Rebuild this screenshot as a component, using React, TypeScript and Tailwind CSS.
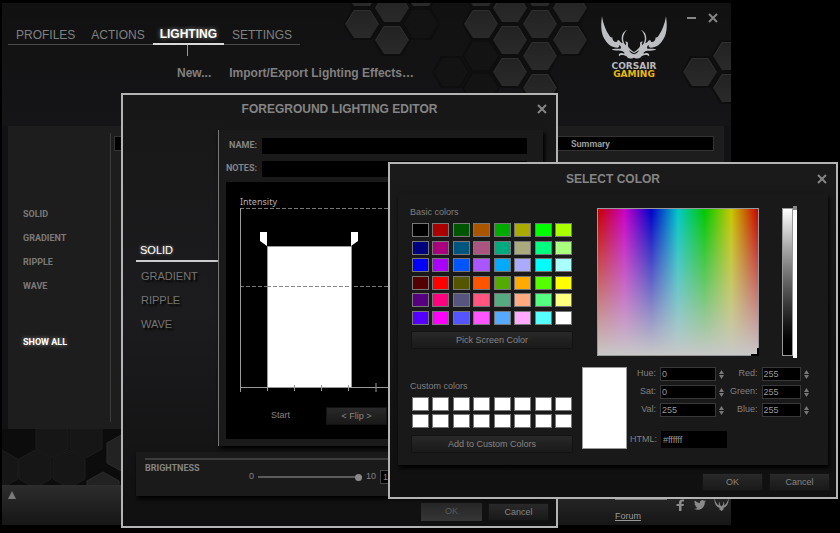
import { useState } from 'react'

const tabs = ['PROFILES', 'ACTIONS', 'LIGHTING', 'SETTINGS']
const effects = ['SOLID', 'GRADIENT', 'RIPPLE', 'WAVE']

const basicColors = [
  '#000000', '#aa0000', '#005500', '#aa5500', '#00aa00', '#aaaa00', '#00ff00', '#aaff00',
  '#00007f', '#aa007f', '#00557f', '#aa557f', '#00aa7f', '#aaaa7f', '#00ff7f', '#aaff7f',
  '#0000ff', '#aa00ff', '#0055ff', '#aa55ff', '#00aaff', '#aaaaff', '#00ffff', '#aaffff',
  '#550000', '#ff0000', '#555500', '#ff5500', '#55aa00', '#ffaa00', '#55ff00', '#ffff00',
  '#55007f', '#ff007f', '#55557f', '#ff557f', '#55aa7f', '#ffaa7f', '#55ff7f', '#ffff7f',
  '#5500ff', '#ff00ff', '#5555ff', '#ff55ff', '#55aaff', '#ffaaff', '#55ffff', '#ffffff',
]
const customColors = Array(16).fill('#ffffff')

// centers of the flat topped hexagons behind the header
const headerHexes = [
  [360, 21, 1], [390, 5, 1], [390, 37, 1], [360, -11, 1], [419, -11, 1], [419, 21, 0],
  [479, 21, 1], [479, -11, 1], [508, 5, 1], [508, 37, 1], [508, 69, 1], [538, -11, 1],
  [538, 21, 1], [538, 53, 1], [538, 85, 1], [568, 5, 1], [568, 37, 1],
  [479, 53, 0], [449, 69, 0], [479, 85, 0],
  [698, 69, 1], [728, 53, 1], [728, 85, 1],
]
const footerHexes = [[50, 10, 0], [84, 10, 0], [0, 40, 0], [33, 40, 0], [67, 40, 0], [121, 24, 1], [101, 62, 1]]

function CloseIcon() {
  return (
    <svg width="10" height="10" viewBox="0 0 10 10" stroke="#858585" strokeWidth="2">
      <path d="M1 1 L9 9 M9 1 L1 9" />
    </svg>
  )
}

function Antlers() {
  const half =
    'M128 50 C123 82 126 108 139 123 C147 135 158 143 174 144 C180 143 182 138 178 136 C184 137 186 142 184 147 C176 149 166 145 157 149 C166 156 182 151 192 156 C198 159 196 163 190 161 C182 158 176 164 179 170 C186 163 194 168 201 169 C204 176 212 179 224 174 L224 164 C218 163 212 158 209 152 L224 161 L224 157 C214 150 203 142 206 132 C207 127 200 123 196 127 C201 127 202 131 199 137 C187 122 190 104 203 90 C189 96 183 113 190 130 C184 131 183 122 175 121 C174 128 168 129 163 124 C160 120 158 116 160 113 C155 115 152 112 149 106 C140 94 132 74 128 50 Z'
  return (
    <svg width="70" height="45" viewBox="119 46 210 135" fill="#bebfc3">
      <path d={half} />
      <path d={half} transform="translate(448 0) scale(-1 1)" />
    </svg>
  )
}

function HeaderPattern() {
  return (
    <svg className="absolute top-0 left-0" width="729" height="120" viewBox="0 0 729 120">
      <defs>
        <linearGradient id="hex" x1="0" y1="0" x2="0" y2="1">
          <stop offset="0" stopColor="#222223" />
          <stop offset="1" stopColor="#2a2a2b" />
        </linearGradient>
      </defs>
      {headerHexes.map(([x, y, lit]) => (
        <g key={x + '-' + y} transform={`translate(${x} ${y})`}>
          <path d="M-19 0 L-10 -16 L10 -16 L19 0 L10 16 L-10 16 Z" fill="#0e0e0f" />
          <path d="M-17 0 L-8 -14 L8 -14 L17 0 L8 14 L-8 14 Z" fill={lit ? 'url(#hex)' : '#131314'} />
          {lit === 1 && <path d="M-16 0 L-8 -13.500 L8 -13.500 L16 0" fill="none" stroke="#2f2f30" />}
        </g>
      ))}
    </svg>
  )
}

function FooterPattern() {
  return (
    <svg className="block" width="729" height="56" viewBox="0 0 729 56">
      {footerHexes.map(([x, y, lit]) => (
        <path
          key={x}
          transform={`translate(${x} ${y})`}
          d="M0 -19 L16 -10 L16 10 L0 19 L-16 10 L-16 -10 Z"
          fill={lit ? '#222223' : '#161617'}
          stroke={lit ? '#2c2c2d' : '#1d1d1e'}
        />
      ))}
    </svg>
  )
}

function PushButton({ children, className = '' }) {
  return (
    <button className={'h-[18px] border border-[#131313] bg-linear-to-b from-[#292929] to-[#191919] text-center text-[9px] leading-none text-[#858585] ' + className}>
      {children}
    </button>
  )
}

function DialogTitle({ children, className }) {
  return (
    <div className={'grid grid-cols-[1fr_auto_1fr] items-center ' + className}>
      <h2 className="col-start-2 text-[12px] leading-4 font-bold text-[#858585]">{children}</h2>
      <button aria-label="Close" className="mr-[9px] justify-self-end">
        <CloseIcon />
      </button>
    </div>
  )
}

function MainWindow() {
  return (
    <main className="mt-[3px] mr-[109px] ml-0.5 overflow-hidden bg-[#121214]">
      <header className="relative h-[123px] bg-linear-to-b from-[#111112] to-[#151517]">
        <HeaderPattern />
        <div className="relative flex justify-between">
          <div className="pt-[22px] pl-1.5">
            <nav className="flex">
              {tabs.map((t) => (
                <button
                  key={t}
                  className={
                    t === 'LIGHTING'
                      ? 'h-[20px] border-b-2 border-[#d8d8d8] px-[7px] text-[12px] leading-[18px] font-bold text-white [text-shadow:0_0_4px_#999]'
                      : 'h-[20px] border-b border-[#4a4a4a] px-2 text-[12px] leading-[18px] text-[#808080]'
                  }
                >
                  {t}
                </button>
              ))}
            </nav>
            <div className="ml-[179px] h-[11px] w-px bg-[#999]" />
            <div className="mt-2 flex gap-[18px] pl-[169px] text-[12px] leading-[18px] font-bold text-[#808080]">
              <button>New...</button>
              <button>Import/Export Lighting Effects…</button>
            </div>
          </div>
          <div className="flex gap-[18px] pt-[10px]">
            <div className="flex w-[70px] flex-col items-center pt-0.5 font-['DejaVu_Sans'] text-[9px] leading-[8px] font-bold">
              <Antlers />
              <span className="mt-0.5 text-[#b9babd]">CORSAIR</span>
              <span className="text-[#e8b90d]">GAMING</span>
            </div>
            <div className="flex h-[10px] items-center gap-3 pr-[13px]">
              <button aria-label="Minimize" className="h-0.5 w-[9px] bg-[#858585]" />
              <button aria-label="Close">
                <CloseIcon />
              </button>
            </div>
          </div>
        </div>
      </header>
      <div className="mr-[7px] ml-1.5 flex h-[303px] bg-[#1d1d1d] py-[7px]">
        <div className="flex w-[103px] flex-col items-start border-r border-[#3c3c3c] pt-[70px] pl-[15px] font-['Liberation_Sans_Narrow',Roboto,sans-serif] text-[9px] font-bold text-[#7a7a7a]">
          {effects.map((e) => (
            <button key={e} className="h-6">{e}</button>
          ))}
          <button className="mt-8 h-6 text-white [text-shadow:0_0_4px_#999]">SHOW ALL</button>
        </div>
        <div className="mt-[3px] mr-[10px] ml-[3px] flex h-[15px] flex-1 items-center justify-end border border-[#333] bg-black">
          <span className="w-[142px] font-[Roboto] text-[9px] leading-3 font-bold text-[#999]">Summary</span>
        </div>
      </div>
      <div className="h-[56px] overflow-hidden bg-[#0c0c0c]">
        <FooterPattern />
      </div>
      <footer className="flex h-[40px] justify-between bg-linear-to-b from-[#2d2d2d] to-[#161616]">
        <button aria-label="Expand" className="mt-1.5 ml-1.5 h-[8px]">
          <svg width="8" height="8" viewBox="0 0 8 8" fill="#7a7a7a">
            <path d="M4 0 L8 8 L0 8 Z" />
          </svg>
        </button>
        <div className="flex pt-[14px] pr-0.5">
          <div className="flex w-[59px] flex-col items-start text-[9px] leading-3 text-[#999]">
            <div className="h-px w-[52px] bg-[#777]" />
            <a href="#" className="mt-[10px] underline">Forum</a>
          </div>
          <div className="flex gap-2 text-[#8a8a8a]">
            <a href="#" aria-label="Facebook">
              <svg width="12" height="13" viewBox="0 0 12 13" fill="currentColor">
                <path d="M5 12 V7 H2.500 V5 H5 V3.500 C5 1 6.500 0 10 .5 V2.500 C8 2.300 7.500 2.500 7.500 4 V5 H10 L9.500 7 H7.500 V12 Z" />
              </svg>
            </a>
            <a href="#" aria-label="Twitter">
              <svg width="12" height="13" viewBox="0 2 24 26" fill="currentColor">
                <path d="M24 6.600a10 10 0 0 1-2.800.8 5 5 0 0 0 2.100-2.700 10 10 0 0 1-3.100 1.200 4.900 4.900 0 0 0-8.400 4.500A14 14 0 0 1 1.700 5.200a4.900 4.900 0 0 0 1.500 6.600 5 5 0 0 1-2.200-.6 4.900 4.900 0 0 0 3.900 4.900 5 5 0 0 1-2.200.1 4.900 4.900 0 0 0 4.600 3.400A10 10 0 0 1 0 21.500a14 14 0 0 0 7.500 2.200c9.100 0 14.300-7.700 14-14.600A10 10 0 0 0 24 6.600z" />
              </svg>
            </a>
            <a href="#" aria-label="Corsair">
              <svg width="15" height="13" viewBox="0 0 15 13" fill="currentColor">
                <path d="M.5 -1 C0 4 2 8 6 9 L5 10 L7.500 12 L10 10 L9 9 C13 8 15 4 14.500 -1 C13.500 3 12.500 5 10 6.500 C10.500 5 10.500 4 9.500 2.500 C9.500 5 9 6 7.500 7.500 C6 6 5.500 5 5.500 2.500 C4.500 4 4.500 5 5 6.500 C2.500 5 1.500 3 .5 -1 Z" />
              </svg>
            </a>
          </div>
        </div>
      </footer>
    </main>
  )
}

function IntensityChart() {
  return (
    <svg className="block" width="290" height="187" viewBox="0 0 290 187" fill="none" stroke="#999">
      <path d="M0 .5 H290 M0 78.500 H290" strokeDasharray="4 2" stroke="#777" />
      <path d="M.5 0 V184 M0 179.500 H290" />
      <path d="M27.500 38.500 H111.500 V179.500 H27.500 Z" fill="#fff" />
      <path d="M27 78.500 H111" strokeDasharray="4 2" stroke="#8a8a8a" />
      <path d="M27.500 177 V183 M54.500 177 V183 M81.500 177 V183 M108.500 177 V183 M136 175 V184" />
      <path d="M20 24 H27 V38 L20 33 Z M118 24 H111 V38 L118 33 Z" fill="#fff" stroke="none" />
    </svg>
  )
}

function LightingEditor() {
  const [brightness, setBrightness] = useState(10)
  return (
    <section className="absolute top-[93px] left-[121px] w-[437px] border-2 border-[#b4b4b4] bg-linear-to-b from-[#171718] via-[#1c1c1e] to-[#101011]">
      <DialogTitle className="h-[27px]">FOREGROUND LIGHTING EDITOR</DialogTitle>
      <div className="mt-2 flex">
        <nav className="ml-[13px] flex w-[82px] shrink-0 flex-col pt-[110px] text-[11px] text-[#757575]">
          {effects.map((e) => (
            <button
              key={e}
              className={
                e === 'SOLID'
                  ? 'mb-0.5 h-[22px] border-b-2 border-[#ccc] pl-1 text-left text-white [text-shadow:0_0_3px_#999]'
                  : 'h-6 pl-[5px] text-left [text-shadow:2px_2px_2px_#000]'
              }
            >
              {e}
            </button>
          ))}
        </nav>
        <div className="mr-[13px] min-w-0 flex-1 border-l border-[#777] bg-[#1a1a1a] pt-2 pb-[7px] shadow-[2px_3px_4px_#000]">
          <div className="grid grid-cols-[38px_1fr] items-center gap-x-[5px] gap-y-[7px] pr-4 font-['Liberation_Sans_Narrow',Roboto,sans-serif] text-[9px] font-bold text-[#858585]">
            <label htmlFor="name" className="text-right">NAME:</label>
            <input id="name" className="h-4 w-full bg-black px-1" />
            <label htmlFor="notes" className="text-right">NOTES:</label>
            <input id="notes" className="h-4 w-full bg-black px-1" />
          </div>
          <div className="mt-[5px] mr-4 ml-[7px] h-[257px] overflow-hidden bg-black pt-[14px] pl-[14px]">
            <div className="font-['Noto_Sans'] text-[9px] leading-3 text-[#b0b0b0]">Intensity</div>
            <IntensityChart />
            <div className="mt-3 flex items-center text-[9px] text-[#858585]">
              <span className="ml-[31px] w-[55px]">Start</span>
              <PushButton className="w-[61px]">&lt; Flip &gt;</PushButton>
            </div>
          </div>
        </div>
      </div>
      <div className="mt-1.5 mr-[13px] ml-[13px] bg-[#1a1a1a] px-[9px] pt-1.5 pb-3 shadow-[1px_3px_4px_#000]">
        <div className="h-0.5 bg-[#3c3c3c]" />
        <div className="flex items-start text-[9px] text-[#858585]">
          <label htmlFor="brightness" className="w-[104px] font-['Liberation_Sans_Narrow',Roboto,sans-serif] leading-4 font-bold">
            BRIGHTNESS
          </label>
          <div className="mt-[10px] flex h-[14px] items-center gap-1">
            <span>0</span>
            <input
              id="brightness"
              type="range"
              min="0"
              max="10"
              value={brightness}
              onChange={(e) => setBrightness(Number(e.target.value))}
              className="h-0.5 w-[104px] appearance-none bg-[#5c5c5c] [&::-webkit-slider-thumb]:h-[7px] [&::-webkit-slider-thumb]:w-[7px] [&::-webkit-slider-thumb]:appearance-none [&::-webkit-slider-thumb]:rounded-full [&::-webkit-slider-thumb]:bg-[#8a8a8a]"
            />
            <span>10</span>
            <input
              aria-label="Brightness value"
              value={brightness}
              onChange={(e) => setBrightness(Number(e.target.value))}
              className="h-[14px] w-7 border border-[#444] bg-black px-0.5"
            />
          </div>
        </div>
      </div>
      <div className="mt-[7px] flex justify-end gap-1.5 pr-[7px] pb-[5px]">
        <button disabled className="h-[18px] w-[61px] bg-linear-to-b from-[#262626] to-[#363636] text-[9px] text-[#5a5a5a]">
          OK
        </button>
        <PushButton className="w-[61px]">Cancel</PushButton>
      </div>
    </section>
  )
}

function Swatches({ colors, className }) {
  return (
    <div className={'ml-0.5 grid w-40 grid-cols-[repeat(8,17px)] content-between justify-between ' + className}>
      {colors.map((c, i) => (
        <button key={i} aria-label={c} className="h-[14px] border border-[#777]" style={{ backgroundColor: c }} />
      ))}
    </div>
  )
}

function Field({ id, label, value, className }) {
  return (
    <div className="flex h-[14px] items-center justify-end gap-[3px]">
      <label htmlFor={id}>{label}:</label>
      <input id={id} defaultValue={value} className={'ml-px h-[14px] border border-[#383838] bg-black px-px text-[9px] text-[#999] ' + className} />
      <svg width="5" height="9" viewBox="0 0 5 9" fill="#777">
        <path d="M2.500 0 L5 4 H0 Z M0 5 H5 L2.500 9 Z" />
      </svg>
    </div>
  )
}

function ColorPicker() {
  return (
    <section className="absolute top-[162px] left-[388px] w-[450px] border-2 border-[#b4b4b4] bg-linear-to-b from-[#1a1a1b] to-[#101011] text-[9px] text-[#808080]">
      <DialogTitle className="h-[30px]">SELECT COLOR</DialogTitle>
      <div className="mx-2 flex bg-[#191919] pt-3 pb-3 pl-3 shadow-[1px_3px_4px_#000]">
        <div className="w-[162px]">
          <div className="leading-3">Basic colors</div>
          <Swatches colors={basicColors} className="mt-[5px] h-[102px]" />
          <PushButton className="mt-1.5 ml-px block w-full">Pick Screen Color</PushButton>
          <div className="mt-[31px] leading-3">Custom colors</div>
          <Swatches colors={customColors} className="mt-[5px] h-[31px]" />
          <PushButton className="mt-[7px] ml-px block w-full">Add to Custom Colors</PushButton>
        </div>
        <div className="ml-[10px] pt-0.5">
          <div className="flex items-start pl-[15px]">
            <div className="flex h-[148px] w-[162px] items-end justify-end border border-[#999] bg-[linear-gradient(to_bottom,rgba(200,200,200,0),#c8c8c8),linear-gradient(to_right,#c80000,#c800c8,#0000c8,#00c8c8,#00c800,#c8c800,#c80000)]">
              <div className="-mr-px -mb-px h-2 w-2 border-r-2 border-b-2 border-black" />
            </div>
            <div className="ml-[23px] h-[148px] w-[11px] border border-[#999] bg-linear-to-b from-white to-black" />
            <div className="-mt-0.5 h-[152px] w-1 border-t-4 border-[#888] bg-white" />
          </div>
          <div className="mt-[9px] flex">
            <div className="h-[82px] w-[45px] border border-[#999] bg-white" />
            <div className="ml-[3px]">
              <div className="flex gap-[6px] pl-[7px]">
                <div className="flex flex-col gap-1">
                  <Field id="hue" label="Hue" value="0" className="w-14" />
                  <Field id="sat" label="Sat" value="0" className="w-14" />
                  <Field id="val" label="Val" value="255" className="w-14" />
                </div>
                <div className="flex flex-col gap-1">
                  <Field id="red" label="Red" value="255" className="w-[39px]" />
                  <Field id="green" label="Green" value="255" className="w-[39px]" />
                  <Field id="blue" label="Blue" value="255" className="w-[39px]" />
                </div>
              </div>
              <div className="mt-[14px] flex items-center gap-1">
                <label htmlFor="html">HTML:</label>
                <input id="html" defaultValue="#ffffff" className="h-[17px] w-[66px] bg-black px-0.5 text-[#999]" />
              </div>
            </div>
          </div>
        </div>
      </div>
      <div className="mt-2 flex justify-end gap-1.5 pr-1.5 pb-1.5">
        <PushButton className="w-[61px]">OK</PushButton>
        <PushButton className="w-[61px]">Cancel</PushButton>
      </div>
    </section>
  )
}

export default function App() {
  return (
    <div className="relative flow-root min-h-screen overflow-hidden bg-black font-['Liberation_Sans',Arial,sans-serif]">
      <MainWindow />
      <LightingEditor />
      <ColorPicker />
    </div>
  )
}
